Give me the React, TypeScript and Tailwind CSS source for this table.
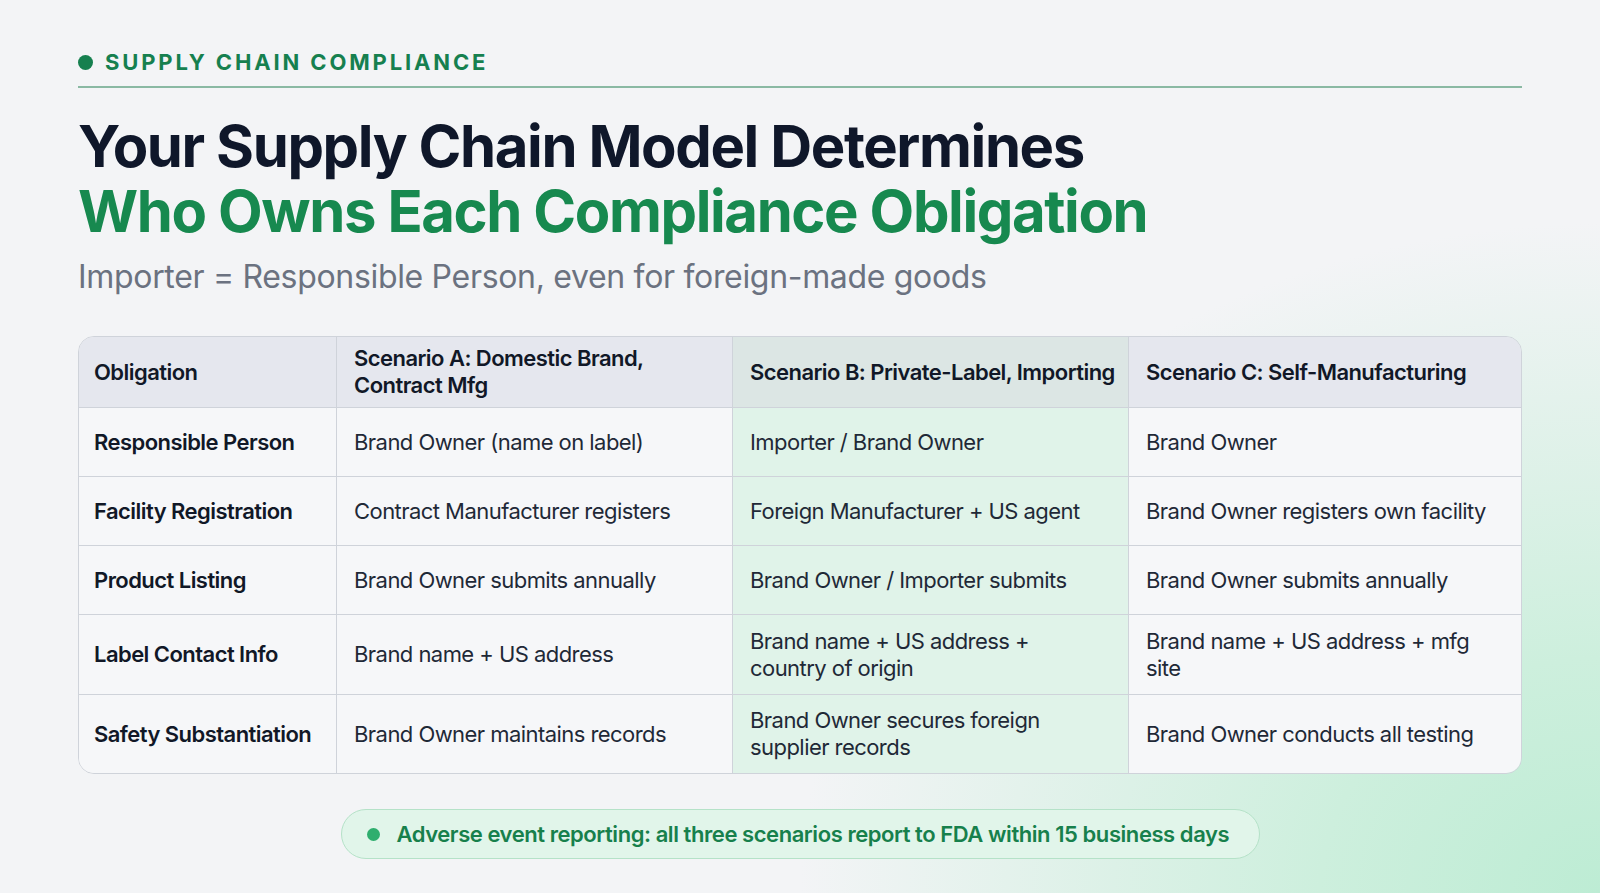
import React from "react";

const rows: [string, string, string, string][] = [
  ["Responsible Person", "Brand Owner (name on label)", "Importer / Brand Owner", "Brand Owner"],
  ["Facility Registration", "Contract Manufacturer registers", "Foreign Manufacturer + US agent", "Brand Owner registers own facility"],
  ["Product Listing", "Brand Owner submits annually", "Brand Owner / Importer submits", "Brand Owner submits annually"],
  ["Label Contact Info", "Brand name + US address", "Brand name + US address + country of origin", "Brand name + US address + mfg site"],
  ["Safety Substantiation", "Brand Owner maintains records", "Brand Owner secures foreign supplier records", "Brand Owner conducts all testing"],
];
const heights = ["h-[69px]", "h-[69px]", "h-[69px]", "h-[80px]", "h-[78px]"];

export default function App() {
  return (
    <div
      className="w-[1600px] h-[893px] overflow-hidden bg-[#f3f4f6] bg-[radial-gradient(ellipse_50%_75%_at_100%_100%,#bdecd4_0%,#cdefdd_35%,rgba(243,244,246,0)_100%)] font-['Inter',sans-serif] px-[78px] pt-[50px]"
    >
      <div className="flex items-center gap-[12px] h-[24px]">
        <span className="w-[15px] h-[15px] rounded-full bg-[#16804f]" />
        <span className="text-[22px] font-bold tracking-[0.13em] text-[#16804f] leading-none">SUPPLY CHAIN COMPLIANCE</span>
      </div>
      <div className="mt-[12px] h-[2px] bg-[#8ab9a3]" />
      <h1 className="mt-[26px] text-[58px] font-bold leading-[65px] tracking-[-0.024em] text-[#0f172a]">
        Your Supply Chain Model Determines
        <br />
        <span className="text-[#17894f]">Who Owns Each Compliance Obligation</span>
      </h1>
      <p className="mt-[11px] text-[32px] leading-[44px] tracking-[-0.01em] text-[#6b7280]">Importer = Responsible Person, even for foreign-made goods</p>

      <div className="mt-[37px] w-[1444px] rounded-[16px] border border-[#cfd3da] overflow-hidden text-[22px] leading-[27px] tracking-[-0.025em] text-[#1f2937]">
        <div className="grid grid-cols-[257px_396px_396px_1fr] h-[71px] bg-[#e5e7ee] font-semibold text-[#111827] border-b border-[#cfd3da]">
          <div className="flex items-center px-[15px]">Obligation</div>
          <div className="flex items-center pl-[17px] pr-[8px] border-l border-[#cfd3da]">Scenario A: Domestic Brand, Contract Mfg</div>
          <div className="flex items-center pl-[17px] pr-[6px] border-l border-[#cfd3da] bg-[#dce6e4]">Scenario B: Private-Label, Importing</div>
          <div className="flex items-center pl-[17px] pr-[8px] border-l border-[#cfd3da]">Scenario C: Self-Manufacturing</div>
        </div>
        {rows.map((r, i) => (
          <div
            key={i}
            className={`grid grid-cols-[257px_396px_396px_1fr] ${heights[i]} bg-[#f6f7f9] ${i < rows.length - 1 ? "border-b border-[#cfd3da]" : ""}`}
          >
            <div className="flex items-center px-[15px] font-semibold text-[#111827]">{r[0]}</div>
            <div className="flex items-center pl-[17px] pr-[8px] border-l border-[#cfd3da]">{r[1]}</div>
            <div className="flex items-center pl-[17px] pr-[28px] border-l border-[#cfd3da] bg-[#e0f3e9]">{r[2]}</div>
            <div className="flex items-center pl-[17px] pr-[24px] border-l border-[#cfd3da]">{r[3]}</div>
          </div>
        ))}
      </div>

      <div className="mt-[35px] flex justify-center">
        <div className="w-[919px] h-[50px] rounded-full border border-[#b5e2c8] bg-[#e1f5ea] flex items-center px-[25px] gap-[17px]">
          <span className="w-[13px] h-[13px] rounded-full bg-[#2fae6e]" />
          <span className="text-[22px] font-semibold tracking-[-0.02em] text-[#17804c]">Adverse event reporting: all three scenarios report to FDA within 15 business days</span>
        </div>
      </div>
    </div>
  );
}
